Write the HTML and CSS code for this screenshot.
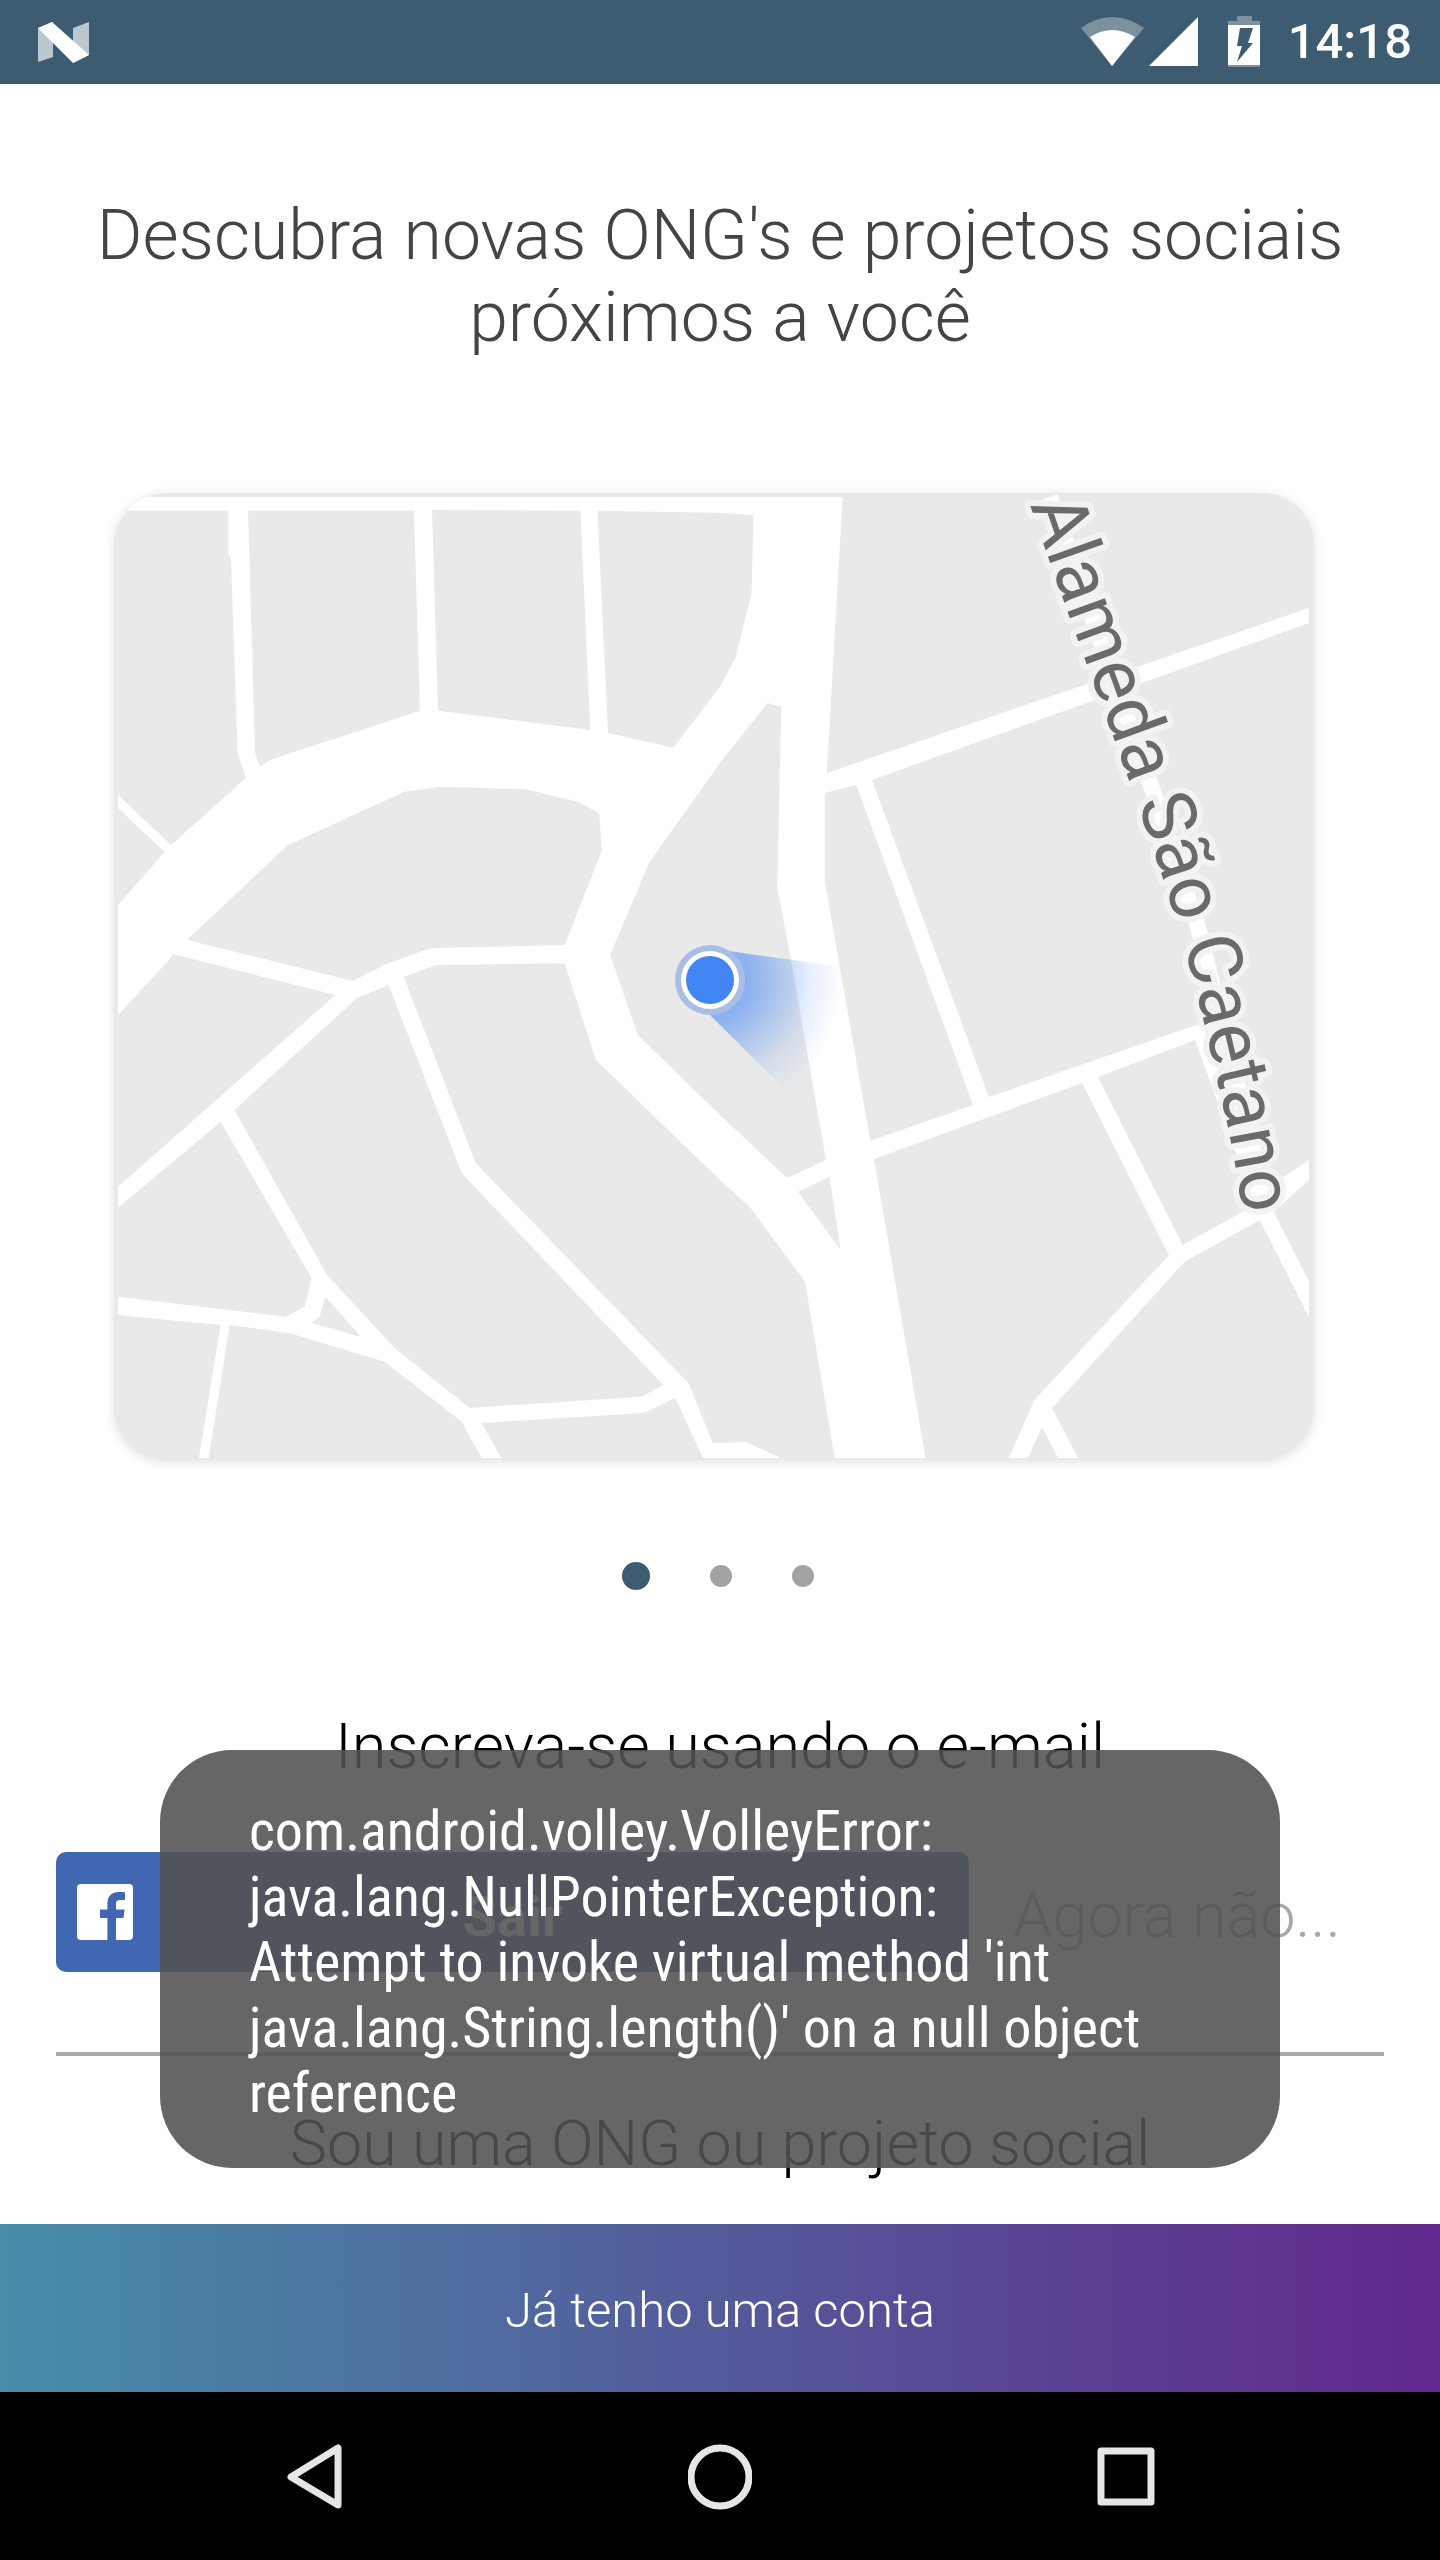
FILE: index.html
```html
<!DOCTYPE html>
<html lang="pt">
<head>
<meta charset="utf-8">
<title>Descubra novas ONG's</title>
<link rel="stylesheet" href="styles.css">
</head>
<body>
<div class="screen">
  <header class="status">
    <svg class="status-logo" viewBox="38 0 52 84" width="52" height="84">
      <path class="ic-dim" d="M38 28 53 22V57L38 62Z"/>
      <path class="ic-dim" d="M73 28 89 22V55L73 63Z"/>
      <path class="ic-white" d="M38 28 52 22 89 55 73 63Z"/>
    </svg>
    <div class="status-right">
      <svg class="status-icons" viewBox="1082 0 180 84" width="180" height="84">
        <path class="ic-fan" d="M1082 28Q1113 6 1145 28L1113 66Z"/>
        <path class="ic-white" d="M1091 37Q1113 23 1136 37L1113 66Z"/>
        <path class="ic-white" d="M1150 66H1199V17Z"/>
        <path class="ic-fan" d="M1238 16H1253V21H1261V25H1229V21H1238Z"/>
        <path class="ic-white" d="M1229 25H1261V65H1229Z"/>
        <path class="ic-fan" d="M1229 65H1261V67H1229Z"/>
        <path class="ic-bolt" d="M1241 28H1254L1249 43H1254L1238 62 1243 46H1238Z"/>
      </svg>
      <span class="clock">14:18</span>
    </div>
  </header>

  <main class="content">
    <h1 class="title">Descubra novas ONG's e projetos sociais<br>próximos a você</h1>

    <div class="map-card">
      <svg class="map" viewBox="114 493 1200 967" width="1200" height="967">
        <defs>
          <radialGradient id="beam" gradientUnits="userSpaceOnUse" cx="710" cy="980" r="135">
            <stop offset="0.3" class="beam-a"/>
            <stop offset="0.6" class="beam-b"/>
            <stop offset="0.75" class="beam-c"/>
            <stop offset="1" class="beam-d"/>
          </radialGradient>
          <path id="street" d="M1030 505C1082 660 1165 860 1201 1010S1232 1150 1248 1240"/>
        </defs>
        <rect class="road-base" x="118" y="497" width="1191" height="961"/>
        <g class="block">
          <polygon points="118,510.7 228.5,510.7 228.5,555 231,558 237.6,753 246,778 171,845 118,795"/>
          <polygon points="118,808 164.5,852 118,905"/>
          <polygon points="248,510.7 414,510.7 420,710.7 270,760 260,766.7 255,753"/>
          <polygon points="432,510 580.4,510.7 590.3,730 438,710.7"/>
          <polygon points="597.4,510.7 717,512.7 753.6,515 751.6,593 735.8,656.7 720,686.7 673.3,747.7 608,733"/>
          <polygon points="187,940 287.8,845 404.5,791.7 440,786.7 525,789.3 578.4,801.7 599,813.3 602,850 564.6,945 430,948.3 386.7,964 353,981"/>
          <polygon points="173,954 335.3,995 118,1186.7 118,1015 169,960"/>
          <polygon points="357,998 388.6,985 461.8,1173.3 663.5,1385 641.7,1396.7 469.7,1408 394.6,1348 327,1275 234.4,1110"/>
          <polygon points="403.7,976.7 436,965 564.6,963.3 596,1060 720,1180 749.7,1206.7 805,1281.7 834.7,1458 781,1458 745.7,1441.7 713,1443.3 688.4,1383.3 475.6,1163"/>
          <polygon points="481.6,1423 643.7,1413 675.3,1398 703,1458 501.3,1458"/>
          <polygon points="461.8,1421.7 481.6,1458 208.7,1458 229.7,1325 289.8,1333 384.7,1361.7"/>
          <polygon points="325.4,1296.7 361,1337 311.5,1323 319.5,1316.7"/>
          <polygon points="118,1208 220.6,1121.7 311.5,1278 304.8,1306.7 285.8,1316.7 118,1296.7"/>
          <polygon points="118,1315 220.6,1325 198.9,1458 118,1458"/>
          <polygon points="610,955 649.7,861.7 720,763 767.4,703 781.3,706.7 777.3,888 791,960 826,1160 787,1178 720,1115 637.8,1035 612,960"/>
          <polygon points="798,1191.7 829.5,1176.7 840.6,1250"/>
          <polygon points="842.6,497 1309,497 1309,608 826.8,773"/>
          <polygon points="824.8,793 856.4,785 973,1105 870.3,1141 838.6,960 824.8,880"/>
          <polygon points="872,780 1309,623 1309,1160 1283.5,1176.7 1262,1190 1202,1023 989,1097"/>
          <polygon points="1098,1077 1195,1040 1255,1205 1182.6,1245"/>
          <polygon points="874,1159 1082,1083 1169,1255 1034.4,1400 1008.7,1458 925.6,1458"/>
          <polygon points="1184.6,1261.7 1259.7,1220 1309,1317 1309,1458 1078,1458 1052,1408"/>
          <polygon points="1309,1180 1273.6,1211.7 1309,1281.7"/>
          <polygon points="1042,1426.7 1028,1458 1058,1458"/>
        </g>
        <polyline class="road-label" points="1050,497 1155,797 1198,927 1238,1087 1266,1200"/>
        <polygon class="beam" points="722,950 850,968 800,1105 700,1005"/>
        <circle class="dot-halo" cx="710" cy="980" r="35"/>
        <circle class="dot-ring" cx="710" cy="980" r="29"/>
        <circle class="dot-core" cx="710" cy="980" r="24"/>
        <text class="street"><textPath href="#street">Alameda São Caetano</textPath></text>
      </svg>
    </div>

    <div class="pager">
      <span class="pager-dot pager-dot-on"></span>
      <span class="pager-dot"></span>
      <span class="pager-dot"></span>
    </div>

    <p class="signup">Inscreva-se usando o e-mail</p>

    <div class="fb-row">
      <div class="fb-button">
        <svg class="fb-icon" viewBox="0 0 56 56" width="56" height="56">
          <path class="fb-square" d="M4 0H52A4 4 0 0 1 56 4V52A4 4 0 0 1 52 56H39V34H46.500L47.600 25.500H39V20C39 17.500 39.700 15.900 43.300 15.900H48V8.200C47.200 8.100 44.500 7.900 41.400 7.900 34.900 7.900 30.400 11.900 30.400 19.200V25.500H23V34H30.400V56H4A4 4 0 0 1 0 52V4A4 4 0 0 1 4 0Z"/>
        </svg>
        <span class="fb-label">Sair</span>
      </div>
      <span class="later">Agora não...</span>
    </div>

    <div class="rule"></div>

    <p class="ngo">Sou uma ONG ou projeto social</p>
  </main>

  <div class="login-bar">Já tenho uma conta</div>

  <nav class="navbar">
    <svg class="nav-icon" viewBox="0 0 64 66" width="64" height="66"><path class="nav-stroke" d="M56 4V61L9 33Z"/></svg>
    <svg class="nav-icon" viewBox="0 0 64 66" width="64" height="66"><circle class="nav-stroke" cx="32" cy="33" r="29"/></svg>
    <svg class="nav-icon" viewBox="0 0 64 66" width="64" height="66"><rect class="nav-stroke" x="7" y="7" width="50" height="51"/></svg>
  </nav>

  <div class="toast">com.android.volley.VolleyError:<br>java.lang.NullPointerException:<br>Attempt to invoke virtual method 'int<br>java.lang.String.length()' on a null object<br>reference</div>
</div>
</body>
</html>
```
FILE: styles.css
```css
* { box-sizing: border-box; }
html, body { margin: 0; padding: 0; background: #fff; }
body { font-family: Roboto, "Noto Sans", sans-serif; }

.screen {
  position: relative;
  width: 1440px;
  height: 2560px;
  display: flex;
  flex-direction: column;
  overflow: hidden;
}

.status {
  height: 84px;
  flex: none;
  background: #3e5c71;
  display: flex;
  justify-content: space-between;
  padding: 0 28px 0 38px;
}
.status-right { display: flex; align-items: center; }
.status-logo, .status-icons { display: block; }
.clock {
  margin-left: 27px;
  font-size: 49px;
  font-weight: 500;
  color: #fff;
  line-height: 84px;
}
.ic-white { fill: #fff; }
.ic-dim { fill: #bcc8d0; }
.ic-fan { fill: #fff; fill-opacity: .32; }
.ic-bolt { fill: #3e5c71; }

.content { flex: 1; display: flex; flex-direction: column; }

.title {
  margin: 110px 0 0;
  font-size: 69.8px;
  font-weight: 300;
  line-height: 82px;
  color: #444;
  text-align: center;
}

.map-card {
  margin: 135px 0 0 114px;
  width: 1200px;
  height: 967px;
  border-radius: 52px;
  overflow: hidden;
  background: #e9e9e9;
  box-shadow: 0 2px 12px rgba(0,0,0,.12);
}
.map { display: block; }
.road-base { fill: #fff; }
.block { fill: #e9e9e9; }
.road-label { fill: none; stroke: #fff; stroke-width: 16; }
.beam { fill: url(#beam); }
.beam-a { stop-color: #4285f4; stop-opacity: .55; }
.beam-b { stop-color: #4285f4; stop-opacity: .27; }
.beam-c { stop-color: #4285f4; stop-opacity: .12; }
.beam-d { stop-color: #4285f4; stop-opacity: 0; }
.dot-halo { fill: #a9bee4; }
.dot-ring { fill: #fff; }
.dot-core { fill: #4285f4; }
.street {
  font-size: 75.2px;
  fill: #6a6a6a;
  stroke: #f2f2f2;
  stroke-width: 12;
  stroke-linejoin: round;
  paint-order: stroke;
}

.pager {
  margin-top: 102px;
  height: 28px;
  display: flex;
  align-items: center;
  justify-content: center;
  gap: 60px;
  padding-right: 5px;
}
.pager-dot {
  width: 22px;
  height: 22px;
  border-radius: 50%;
  background: #a3a3a3;
}
.pager-dot-on {
  width: 28px;
  height: 28px;
  background: #3e5c71;
}

.signup {
  margin: 120px 0 0;
  font-size: 63px;
  font-weight: 300;
  line-height: 74px;
  color: #000;
  text-align: center;
}

.fb-row {
  margin: 68px 0 0 56px;
  display: flex;
  align-items: center;
}
.fb-button {
  position: relative;
  width: 913px;
  height: 120px;
  flex: none;
  border-radius: 10px;
  background: #4267b2;
  display: flex;
  align-items: center;
  justify-content: center;
  padding-top: 10px;
}
.fb-icon { position: absolute; left: 21px; top: 32px; }
.fb-square { fill: #fff; }
.fb-label { font-size: 56px; font-weight: 700; color: #fff; }
.later {
  margin-left: 44px;
  font-size: 63px;
  font-weight: 300;
  line-height: 74px;
  color: #a8a8a8;
  padding-top: 7px;
}

.rule {
  margin: 80px 0 0 56px;
  width: 1328px;
  height: 4px;
  background: #aaa;
}

.ngo {
  margin: 51px 0 0;
  font-size: 62.8px;
  font-weight: 300;
  line-height: 74px;
  color: #000;
  text-align: center;
}

.login-bar {
  height: 168px;
  flex: none;
  background: linear-gradient(90deg, #468da8, #61278c);
  color: #fff;
  font-size: 49px;
  font-weight: 300;
  display: flex;
  align-items: center;
  justify-content: center;
  padding-top: 5px;
}

.navbar {
  height: 168px;
  flex: none;
  background: #000;
  display: flex;
  justify-content: center;
  gap: 342px;
  padding-top: 52px;
}
.nav-icon { display: block; }
.nav-stroke {
  fill: none;
  stroke: #e6e6e6;
  stroke-width: 7;
  stroke-linejoin: round;
}

.toast {
  position: absolute;
  left: 160px;
  top: 1750px;
  width: 1120px;
  height: 418px;
  padding: 49px 0 0 89px;
  border-radius: 72px;
  background: rgba(82,82,82,.884);
  color: #fff;
  font-size: 56px;
  font-stretch: 75%;
  line-height: 65.6px;
}
```
